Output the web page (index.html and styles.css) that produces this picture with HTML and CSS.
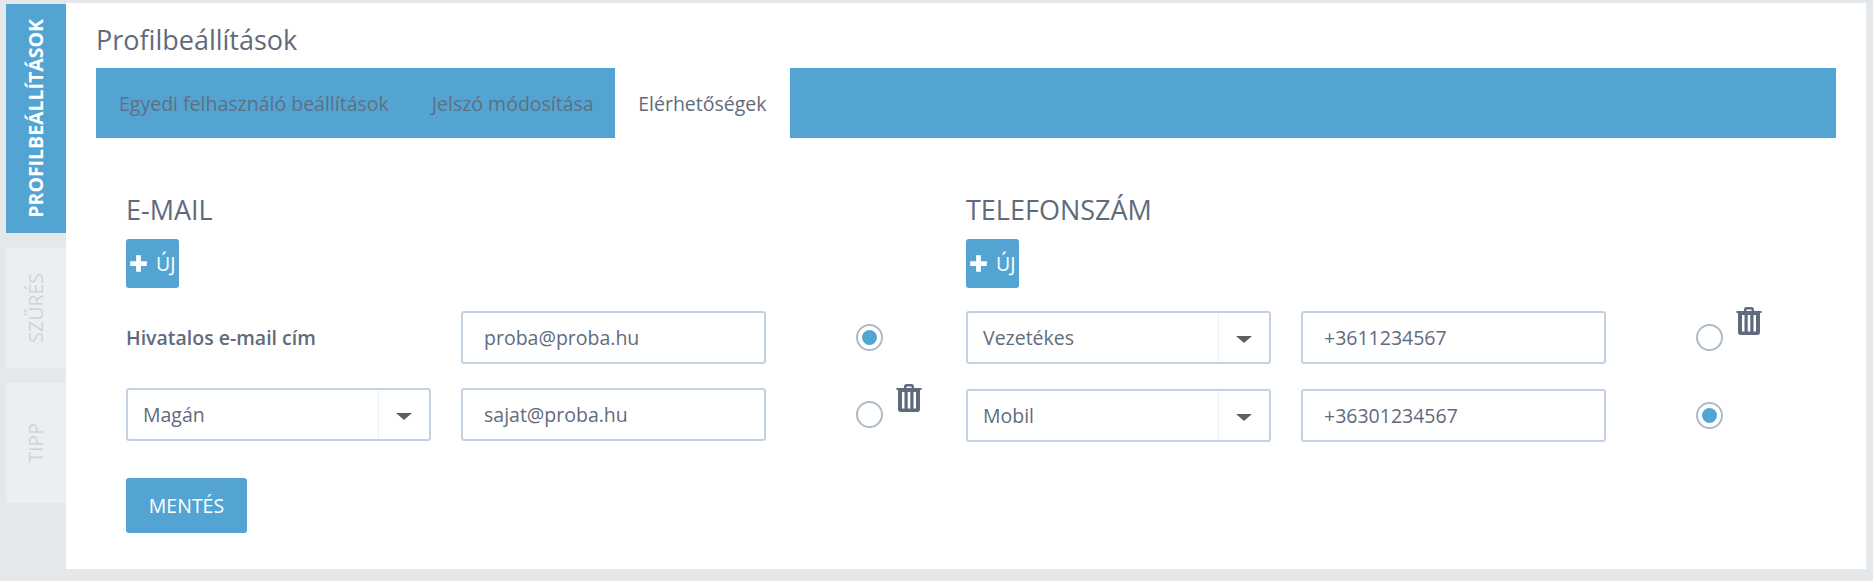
FILE: index.html
```html
<!DOCTYPE html>
<html lang="hu">
<head>
    <meta charset="UTF-8">
    <title>Profilbeállítások</title>
    <link rel="stylesheet" href="styles.css">
</head>
<body>
<div class="page">
    <nav class="side">
        <a class="side-tab side-main"><span>PROFILBEÁLLÍTÁSOK</span></a>
        <a class="side-tab side-mid"><span>SZŰRÉS</span></a>
        <a class="side-tab side-mid"><span>TIPP</span></a>
    </nav>
    <main class="panel">
        <h1 class="title">Profilbeállítások</h1>
        <div class="tabs">
            <a class="tab">Egyedi felhasználó beállítások</a>
            <a class="tab">Jelszó módosítása</a>
            <a class="tab active">Elérhetőségek</a>
        </div>
        <div class="cols">
            <section class="col">
                <h2 class="col-title">E-MAIL</h2>
                <button class="btn-new"><svg class="plus" viewBox="0 0 16 16"><path d="M6 1h4v5h5v4h-5v5H6v-5H1V6h5z"/></svg>ÚJ</button>
                <div class="row first">
                    <label class="row-label">Hivatalos e-mail cím</label>
                    <input class="field" type="text" value="proba@proba.hu">
                    <span class="radio on"></span>
                </div>
                <div class="row">
                    <div class="select"><span class="select-text">Magán</span><span class="select-arrow"></span></div>
                    <input class="field" type="text" value="sajat@proba.hu">
                    <span class="radio"></span>
                    <svg class="trash" viewBox="0 0 26 29"><path d="M8 5V3.500C8 2 9 1 10.500 1h5C17 1 18 2 18 3.500V5h7.500v2H24v19c0 1.700-1 3-2.500 3h-17C3 29 2 27.700 2 26V7H.5V5zm2.500 0h5V3.500h-5zM6 9v16.500h2.500V9zm5.700 0v16.500h2.600V9zm5.800 0v16.500H20V9z" fill-rule="evenodd"/></svg>
                </div>
                <button class="btn-save">MENTÉS</button>
            </section>
            <section class="col col-right">
                <h2 class="col-title">TELEFONSZÁM</h2>
                <button class="btn-new"><svg class="plus" viewBox="0 0 16 16"><path d="M6 1h4v5h5v4h-5v5H6v-5H1V6h5z"/></svg>ÚJ</button>
                <div class="row first">
                    <div class="select"><span class="select-text">Vezetékes</span><span class="select-arrow"></span></div>
                    <input class="field" type="text" value="+3611234567">
                    <span class="radio"></span>
                    <svg class="trash" viewBox="0 0 26 29"><path d="M8 5V3.500C8 2 9 1 10.500 1h5C17 1 18 2 18 3.500V5h7.500v2H24v19c0 1.700-1 3-2.500 3h-17C3 29 2 27.700 2 26V7H.5V5zm2.500 0h5V3.500h-5zM6 9v16.500h2.500V9zm5.700 0v16.500h2.600V9zm5.800 0v16.500H20V9z" fill-rule="evenodd"/></svg>
                </div>
                <div class="row">
                    <div class="select"><span class="select-text">Mobil</span><span class="select-arrow"></span></div>
                    <input class="field" type="text" value="+36301234567">
                    <span class="radio on"></span>
                </div>
            </section>
        </div>
    </main>
</div>
</body>
</html>
```

FILE: styles.css
```css
* {
  box-sizing: border-box;
}

body {
  margin: 0;
  height: 581px;
  overflow: hidden;
  background: #e4e8eb;
  font-family: "Open Sans", sans-serif;
  color: #5f6b7c;
}

.page {
  display: flex;
  padding: 3px 7px 12px 6px;
  height: 581px;
}

/* side tabs */
.side {
  width: 60px;
  flex: none;
  padding-top: 1px;
}

.side-tab {
  display: flex;
  align-items: center;
  justify-content: center;
  width: 60px;
  height: 120px;
  margin-bottom: 15px;
  background: #ebeff2;
  color: #cfd4d9;
  font-size: 19.500px;
}

.side-tab span {
  writing-mode: vertical-rl;
  transform: rotate(180deg);
  line-height: 20px;
}

.side-main {
  height: 229px;
  background: #53a4d3;
  color: #fff;
  font-weight: 700;
}

/* panel */
.panel {
  flex: 1;
  background: #fff;
  padding: 0 30px;
}

.title {
  margin: 0;
  height: 65px;
  padding-top: 19px;
  font-size: 27px;
  font-weight: 400;
  line-height: 36px;
}

.tabs {
  display: flex;
  height: 70px;
  background: #53a4d3;
}

.tab {
  padding: 0 21.500px;
  line-height: 72px;
  font-size: 19.500px;
  color: #5f7082;
}

.tab:first-child {
  padding-left: 23px;
}

.active {
  padding: 0 23px;
  background: #fff;
  color: #5f6b7c;
}

.cols {
  display: flex;
  padding: 0 30px;
}

.col {
  width: 840px;
  flex: none;
}

.col-title {
  margin: 0;
  padding-top: 54px;
  height: 101px;
  font-size: 27px;
  line-height: 36px;
  font-weight: 400;
}

.btn-new {
  display: flex;
  align-items: center;
  width: 53px;
  height: 49px;
  padding: 0 0 0 3px;
  border: none;
  border-radius: 3px;
  background: #53a4d3;
  color: #fff;
  font: 400 19.500px "Open Sans", sans-serif;
}

.plus {
  width: 19px;
  height: 19px;
  margin-right: 8px;
  fill: #fff;
}

.row {
  display: flex;
  align-items: center;
  height: 53px;
  margin-top: 24px;
  position: relative;
}

.first {
  margin-top: 23px;
}

.col-right .row:last-child {
  margin-top: 25px;
}

.row-label {
  width: 335px;
  flex: none;
  font-size: 19.500px;
  font-weight: 600;
}

.field {
  width: 305px;
  height: 53px;
  flex: none;
  padding: 0 21px;
  border: 2px solid #c3d2e2;
  border-radius: 3px;
  background: #fff;
  font: 400 19.500px "Open Sans", sans-serif;
  color: #5f6b7c;
  outline: none;
}

.select {
  display: flex;
  width: 305px;
  height: 53px;
  flex: none;
  margin-right: 30px;
  border: 2px solid #c3d2e2;
  border-radius: 3px;
  font-size: 19.500px;
}

.select-text {
  flex: 1;
  padding-left: 15px;
  line-height: 49px;
  border-right: 1px solid #ebeff2;
}

.select-arrow {
  position: relative;
  width: 50px;
  flex: none;
}

.select-arrow::after {
  content: "";
  position: absolute;
  left: 17px;
  top: 23px;
  border-style: solid;
  border-width: 7px 8px 0;
  border-color: #5a5f66 transparent transparent;
}

.radio {
  position: relative;
  width: 27px;
  height: 27px;
  flex: none;
  margin-left: 90px;
  border: 2px solid #adbbc7;
  border-radius: 50%;
  background: #fff;
}

.on::after {
  content: "";
  position: absolute;
  left: 4px;
  top: 4px;
  width: 15px;
  height: 15px;
  border-radius: 50%;
  background: #53a4d3;
}

.trash {
  position: absolute;
  left: 770px;
  top: -5px;
  width: 26px;
  height: 29px;
  fill: #5f6b7c;
}

.btn-save {
  display: block;
  width: 121px;
  height: 55px;
  margin-top: 37px;
  border: none;
  border-radius: 3px;
  background: #53a4d3;
  color: #fff;
  font: 400 19.500px "Open Sans", sans-serif;
}
```
